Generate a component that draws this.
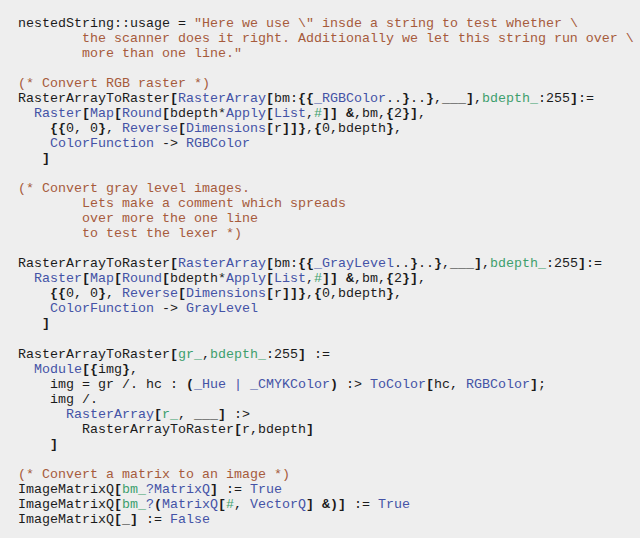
const C: Record<string, string> = {
  n: "text-[#1b1b1b]",
  b: "text-[#1b1b1b] font-bold",
  s: "text-[#a65b3c]",
  f: "text-[#4453a6]",
  v: "text-[#3d9f6d]",
};

type Tok = [keyof typeof C, string];

const lines: Tok[][] = [
  [["n", "nestedString::usage = "], ["s", '"Here we use \\" insde a string to test whether \\']],
  [["s", "        the scanner does it right. Additionally we let this string run over \\"]],
  [["s", '        more than one line."']],
  [],
  [["s", "(* Convert RGB raster *)"]],
  [["n", "RasterArrayToRaster"], ["b", "["], ["f", "RasterArray"], ["b", "["], ["n", "bm:"], ["b", "{{"], ["f", "_RGBColor"], ["n", ".."], ["b", "}"], ["n", ".."], ["b", "}"], ["n", ",___"], ["b", "]"], ["n", ","], ["v", "bdepth_"], ["n", ":255"], ["b", "]"], ["n", ":="]],
  [["n", "  "], ["f", "Raster"], ["b", "["], ["f", "Map"], ["b", "["], ["f", "Round"], ["b", "["], ["n", "bdepth*"], ["f", "Apply"], ["b", "["], ["f", "List"], ["n", ","], ["v", "#"], ["b", "]]"], ["n", " "], ["b", "&"], ["n", ",bm,"], ["b", "{"], ["n", "2"], ["b", "}]"], ["n", ","]],
  [["n", "    "], ["b", "{{"], ["n", "0, 0"], ["b", "}"], ["n", ", "], ["f", "Reverse"], ["b", "["], ["f", "Dimensions"], ["b", "["], ["n", "r"], ["b", "]]}"], ["n", ","], ["b", "{"], ["n", "0,bdepth"], ["b", "}"], ["n", ","]],
  [["n", "    "], ["f", "ColorFunction"], ["n", " -> "], ["f", "RGBColor"]],
  [["b", "   ]"]],
  [],
  [["s", "(* Convert gray level images."]],
  [["s", "        Lets make a comment which spreads"]],
  [["s", "        over more the one line"]],
  [["s", "        to test the lexer *)"]],
  [],
  [["n", "RasterArrayToRaster"], ["b", "["], ["f", "RasterArray"], ["b", "["], ["n", "bm:"], ["b", "{{"], ["f", "_GrayLevel"], ["n", ".."], ["b", "}"], ["n", ".."], ["b", "}"], ["n", ",___"], ["b", "]"], ["n", ","], ["v", "bdepth_"], ["n", ":255"], ["b", "]"], ["n", ":="]],
  [["n", "  "], ["f", "Raster"], ["b", "["], ["f", "Map"], ["b", "["], ["f", "Round"], ["b", "["], ["n", "bdepth*"], ["f", "Apply"], ["b", "["], ["f", "List"], ["n", ","], ["v", "#"], ["b", "]]"], ["n", " "], ["b", "&"], ["n", ",bm,"], ["b", "{"], ["n", "2"], ["b", "}]"], ["n", ","]],
  [["n", "    "], ["b", "{{"], ["n", "0, 0"], ["b", "}"], ["n", ", "], ["f", "Reverse"], ["b", "["], ["f", "Dimensions"], ["b", "["], ["n", "r"], ["b", "]]}"], ["n", ","], ["b", "{"], ["n", "0,bdepth"], ["b", "}"], ["n", ","]],
  [["n", "    "], ["f", "ColorFunction"], ["n", " -> "], ["f", "GrayLevel"]],
  [["b", "   ]"]],
  [],
  [["n", "RasterArrayToRaster"], ["b", "["], ["v", "gr_"], ["n", ","], ["v", "bdepth_"], ["n", ":255"], ["b", "]"], ["n", " :="]],
  [["n", "  "], ["f", "Module"], ["b", "[{"], ["n", "img"], ["b", "}"], ["n", ","]],
  [["n", "    img = gr /. hc : "], ["b", "("], ["f", "_Hue | _CMYKColor"], ["b", ")"], ["n", " :> "], ["f", "ToColor"], ["b", "["], ["n", "hc, "], ["f", "RGBColor"], ["b", "]"], ["n", ";"]],
  [["n", "    img /."]],
  [["n", "      "], ["f", "RasterArray"], ["b", "["], ["v", "r_"], ["n", ", ___"], ["b", "]"], ["n", " :>"]],
  [["n", "        RasterArrayToRaster"], ["b", "["], ["n", "r,bdepth"], ["b", "]"]],
  [["b", "    ]"]],
  [],
  [["s", "(* Convert a matrix to an image *)"]],
  [["n", "ImageMatrixQ"], ["b", "["], ["v", "bm_"], ["f", "?MatrixQ"], ["b", "]"], ["n", " := "], ["f", "True"]],
  [["n", "ImageMatrixQ"], ["b", "["], ["v", "bm_"], ["f", "?"], ["b", "("], ["f", "MatrixQ"], ["b", "["], ["v", "#"], ["n", ", "], ["f", "VectorQ"], ["b", "]"], ["n", " "], ["b", "&)]"], ["n", " := "], ["f", "True"]],
  [["n", "ImageMatrixQ"], ["b", "["], ["n", "_"], ["b", "]"], ["n", " := "], ["f", "False"]],
];

export default function App() {
  return (
    <div className="w-[640px] h-[538px] bg-[#eeeeee] overflow-hidden">
      <pre className="pl-[18px] pt-[15.5px] font-['Liberation_Mono',monospace] text-[13.33px] leading-[15.05px] whitespace-pre">
        {lines.map((line, i) => (
          <div key={i} className="h-[15.05px]">
            {line.map(([k, t], j) => (
              <span key={j} className={C[k]}>
                {t}
              </span>
            ))}
          </div>
        ))}
      </pre>
    </div>
  );
}
